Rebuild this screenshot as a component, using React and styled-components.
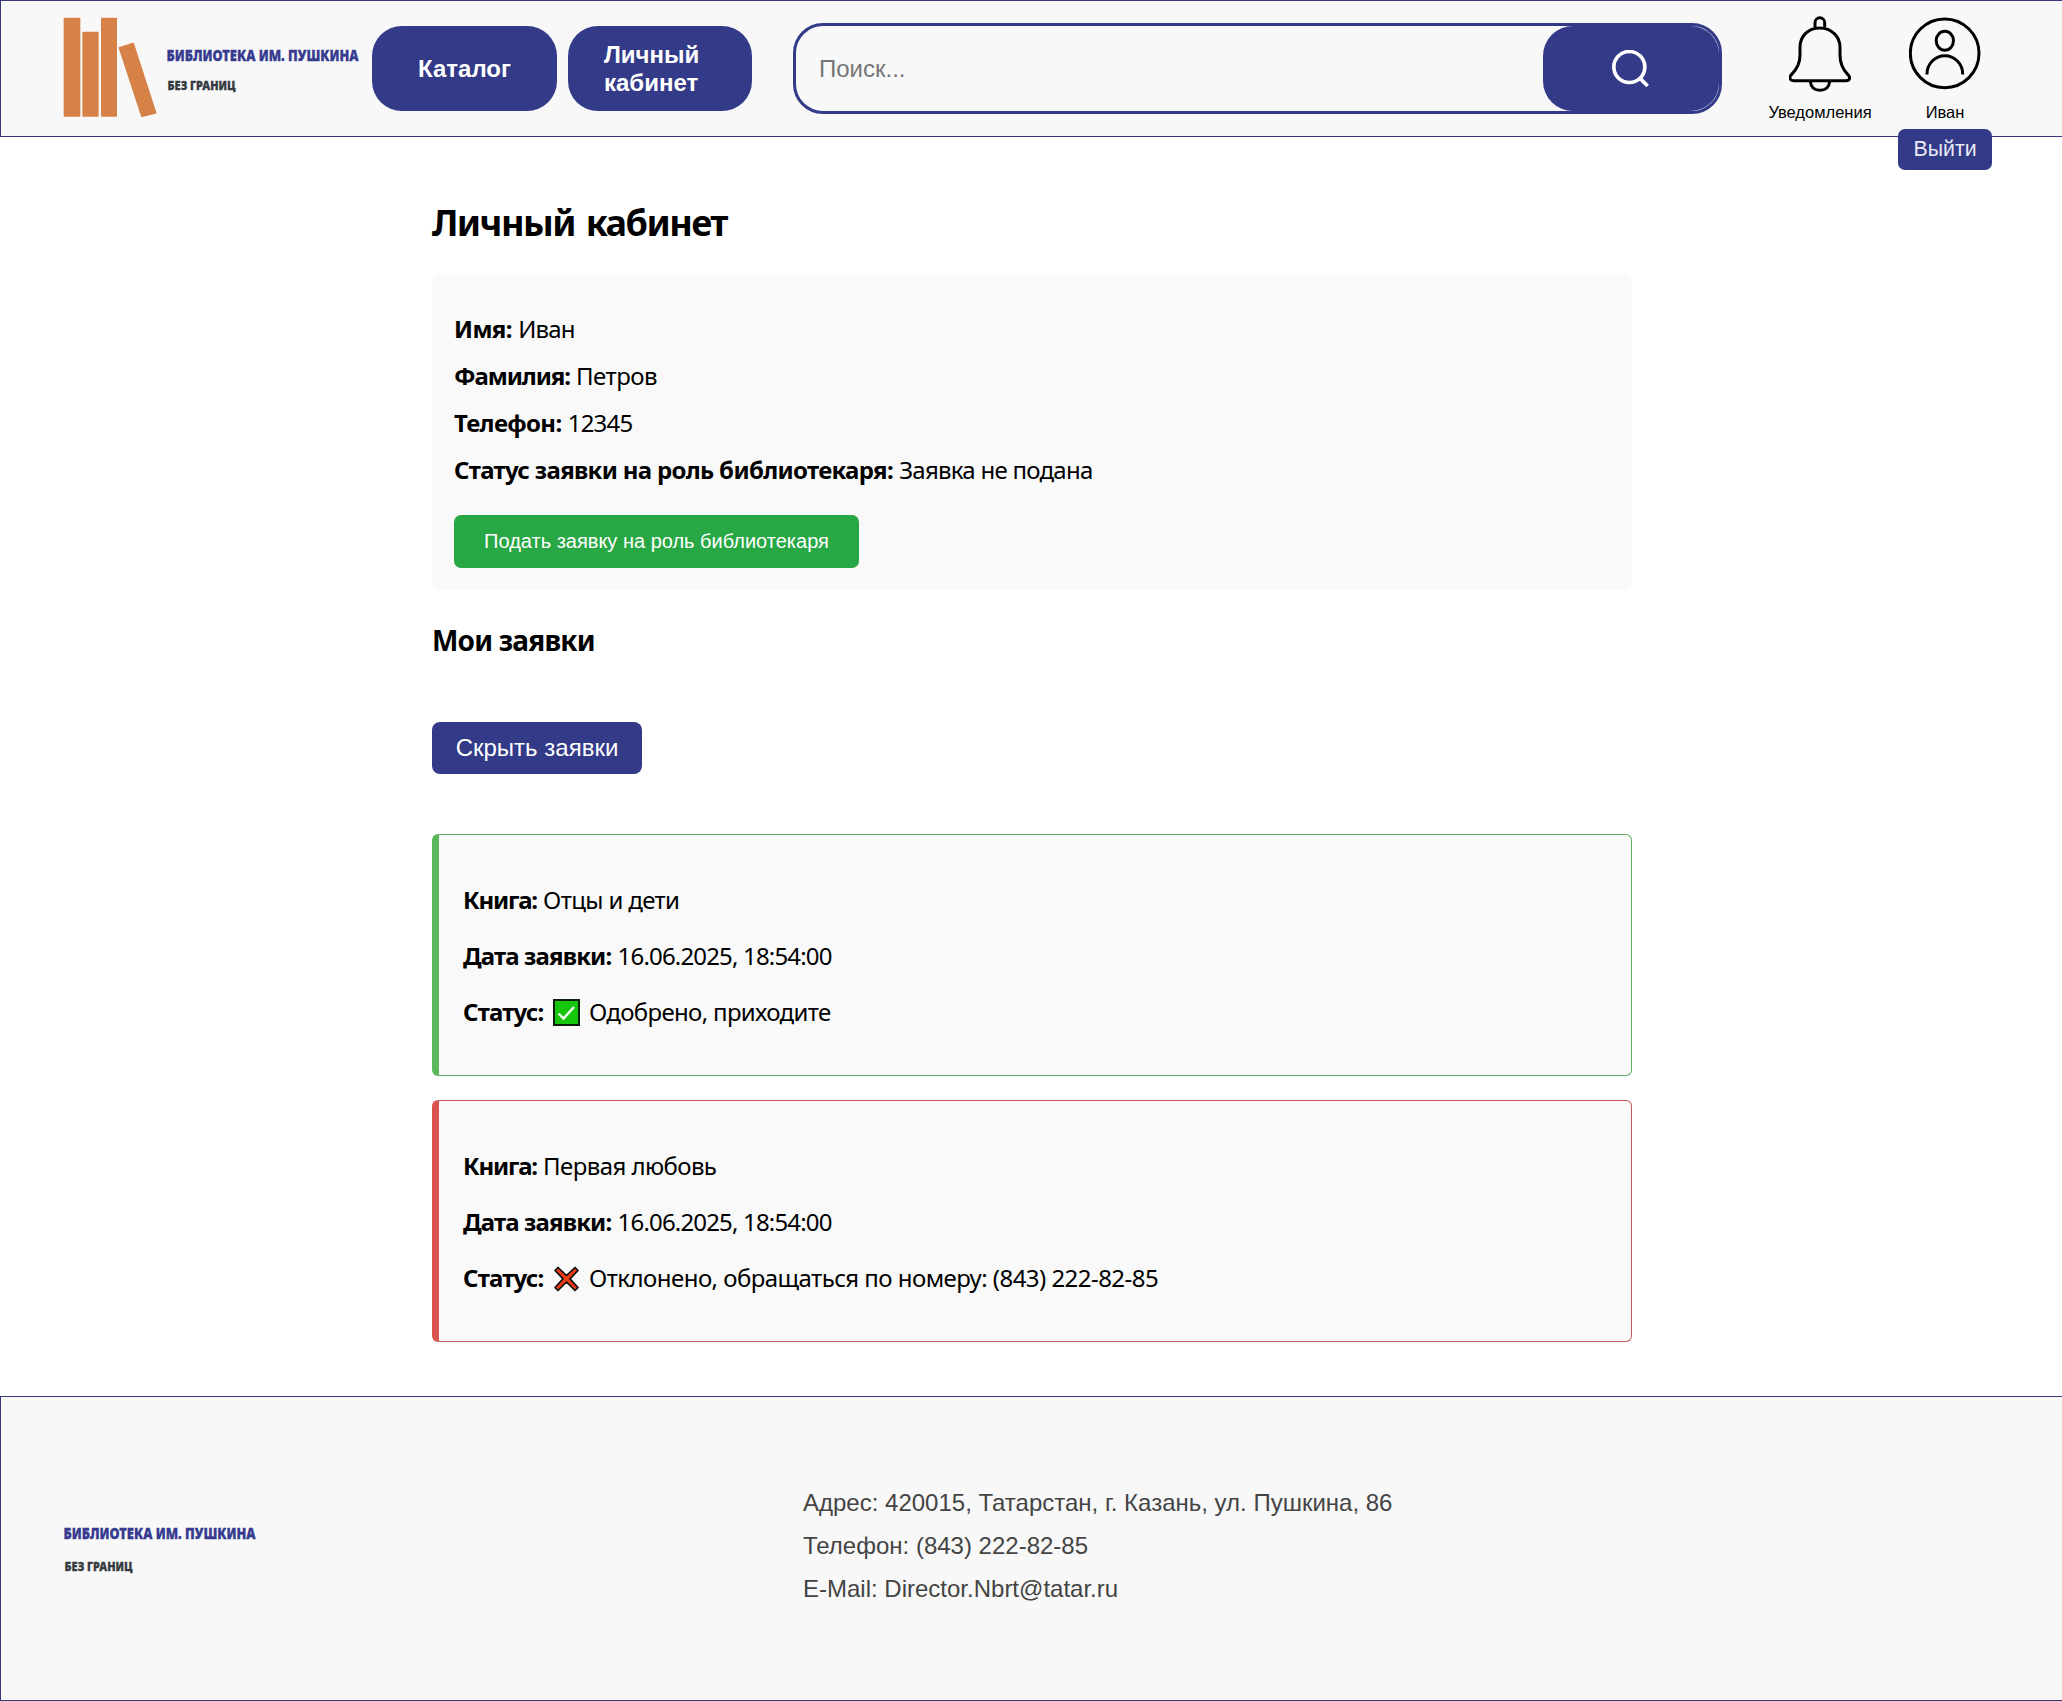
import React from 'react';
import styled, { createGlobalStyle } from 'styled-components';

const BLUE = '#333a87';
const EDGE = '#35387a';
const ARIAL = '"Liberation Sans", Arial, sans-serif';

const GlobalStyle = createGlobalStyle`
  * { box-sizing: border-box; }
  body { margin: 0; background: #fff; color: #000; font-family: "Noto Sans", "Segoe UI", sans-serif; }
  h1, h2, p { margin: 0; }
  button { border: 0; font-family: ${ARIAL}; cursor: pointer; }
`;

const Viewport = styled.div`
  overflow: hidden;
`;

const Page = styled.div`
  width: calc(100% + 2px);
`;

const Header = styled.header`
  display: flex;
  align-items: center;
  height: 137px;
  padding-left: 62px;
  background: #f8f8f8;
  border: 1px solid ${EDGE};
  font-family: ${ARIAL};
`;

const Logo = styled.a`
  display: flex;
  align-items: center;
  gap: 9px;
  width: 309px;
  flex: none;
`;

const Books = styled.svg`
  width: 94px;
  height: 100px;
  margin-top: -4px;
  fill: #d68147;
  stroke: #d68147;
  stroke-width: 6;
  stroke-linejoin: round;
`;

const Wordmark = styled.svg`
  display: block;
  width: 194px;
  height: ${(p) => p.$height}px;
  margin-top: ${(p) => p.$shift}px;
  overflow: visible;
  font-family: "Noto Sans", sans-serif;
  font-weight: 900;
  stroke-width: 0.3;
`;

const Nav = styled.nav`
  display: flex;
  gap: 11px;
`;

const NavButton = styled.button`
  width: ${(p) => p.$width}px;
  height: 85px;
  padding: 0 36px;
  border-radius: 30px;
  background: ${BLUE};
  color: #fff;
  font-size: 24px;
  font-weight: 700;
  line-height: 28px;
  text-align: ${(p) => p.$align || 'center'};
`;

const Search = styled.form`
  display: flex;
  width: 929px;
  height: 91px;
  margin-left: 41px;
  border: 3px solid ${BLUE};
  border-radius: 30px;
`;

const SearchInput = styled.input`
  flex: 1;
  min-width: 0;
  padding: 0 23px;
  border: 0;
  background: none;
  font: 24px ${ARIAL};
  &::placeholder { color: #757575; opacity: 1; }
`;

const SearchButton = styled.button`
  display: flex;
  align-items: center;
  justify-content: center;
  width: 176px;
  padding: 0 1px 0 0;
  border-radius: 30px 28px 28px 30px;
  background: ${BLUE};
`;

const LineIcon = styled.svg`
  display: block;
  width: ${(p) => p.$w}px;
  height: ${(p) => p.$h}px;
  fill: none;
  stroke: ${(p) => p.$color || '#000'};
  stroke-width: ${(p) => p.$stroke || 9};
`;

const Action = styled.div`
  position: relative;
  display: flex;
  flex-direction: column;
  align-items: center;
  justify-content: space-between;
  width: ${(p) => p.$width}px;
  height: 106px;
  margin: 1px 0 0 ${(p) => p.$left}px;
  padding-top: ${(p) => p.$top}px;
  font-size: 16.5px;
  line-height: 19px;
`;

const LogoutButton = styled.button`
  position: absolute;
  top: 113px;
  left: 0;
  width: 94px;
  height: 41px;
  padding: 0;
  border-radius: 7px;
  background: ${BLUE};
  color: #e9eaf5;
  font-size: 21.3px;
`;

const Main = styled.main`
  display: flex;
  flex-direction: column;
  align-items: flex-start;
  width: 1200px;
  margin: 0 auto;
  padding: 62px 0 54px;
`;

const Title = styled.h1`
  font-size: 36px;
  line-height: 48px;
  letter-spacing: -1.55px;
  word-spacing: 3px;
`;

const Subtitle = styled.h2`
  margin-top: 31px;
  font-size: 28px;
  line-height: 38px;
  letter-spacing: -0.8px;
`;

const ProfileCard = styled.section`
  display: flex;
  flex-direction: column;
  align-items: flex-start;
  gap: 15px;
  width: 100%;
  height: 315px;
  margin-top: 28px;
  padding: 38px 22px 22px;
  border-radius: 8px;
  background: #f9f9f9;
`;

const Row = styled.p`
  height: 32px;
  font-size: 24px;
  line-height: 32px;
  white-space: nowrap;
`;

const Label = styled.strong`
  font-weight: 700;
  letter-spacing: ${(p) => p.$track}px;
`;

const Value = styled.span`
  letter-spacing: ${(p) => p.$track}px;
`;

const ApplyButton = styled.button`
  width: 405px;
  height: 53px;
  margin-top: 14px;
  padding: 0;
  border-radius: 7px;
  background: #28a745;
  color: #fff;
  font-size: 20px;
`;

const ToggleButton = styled.button`
  width: 210px;
  height: 52px;
  margin: 63px 0 60px;
  padding: 0;
  border-radius: 8px;
  background: ${BLUE};
  color: #fff;
  font-size: 24px;
`;

const RequestList = styled.div`
  display: flex;
  flex-direction: column;
  gap: 24px;
  width: 100%;
`;

const RequestCard = styled.article`
  display: flex;
  flex-direction: column;
  gap: 24px;
  height: 242px;
  padding: 49px 24px;
  border: 1px solid ${(p) => p.$edge};
  border-left: 7px solid ${(p) => p.$color};
  border-radius: 6px;
  background: #f9f9f9;
`;

const StatusIcon = styled.svg`
  width: 27px;
  height: 27px;
  margin: 0 3px 0 3px;
  vertical-align: -5px;
`;

const Footer = styled.footer`
  display: flex;
  height: 305px;
  padding: 84px 0 0 62px;
  background: #f8f8f8;
  border: 1px solid ${EDGE};
`;

const FooterLogo = styled.div`
  width: 740px;
  padding-top: 46px;
`;

const Contacts = styled.address`
  font: normal 24px/43px ${ARIAL};
  color: #444;
`;

const LogoText = ({ height, second, shift = 0 }) => (
  <Wordmark $height={height} $shift={shift} viewBox={`0 0 194 ${height}`}>
    <text x="0.5" y="12" fontSize="15.4" fill="#363b8f" stroke="#363b8f" textLength="192" lengthAdjust="spacingAndGlyphs">
      БИБЛИОТЕКА ИМ. ПУШКИНА
    </text>
    <text x="1.5" y={second} fontSize="12.2" fill="#363b42" stroke="#363b42" textLength="68" lengthAdjust="spacingAndGlyphs">
      БЕЗ ГРАНИЦ
    </text>
  </Wordmark>
);

const Approved = () => (
  <StatusIcon viewBox="0 0 27 27">
    <rect x="1" y="1" width="25" height="25" fill="#16c60c" stroke="#0c1f0c" strokeWidth="2" />
    <path d="M5.5 14.5l5 5L21 8" fill="none" stroke="#f4fff4" strokeWidth="2.4" />
  </StatusIcon>
);

const Rejected = () => (
  <StatusIcon viewBox="0 0 27 27">
    <path
      d="M5 2.500l8.500 8L22 2.500l3 3-8 8.400 8 8.600-3 3-8.500-8.500L5 25.500l-3-3 8-8.600-8-8.400z"
      fill="#f03a17"
      stroke="#111"
      strokeWidth="1.7"
      strokeLinejoin="round"
    />
  </StatusIcon>
);

const profile = [
  ['Имя:', -0.6, 'Иван', -0.8],
  ['Фамилия:', -1.1, 'Петров', -0.55],
  ['Телефон:', -0.65, '12345', -0.8],
  ['Статус заявки на роль библиотекаря:', -0.68, 'Заявка не подана', -0.74],
];

const requests = [
  {
    color: '#5cb85c',
    edge: '#62ae65',
    book: 'Отцы и дети',
    bookTrack: -0.65,
    status: 'Одобрено, приходите',
    track: -0.66,
    Icon: Approved,
  },
  {
    color: '#d9534f',
    edge: '#c35c58',
    book: 'Первая любовь',
    bookTrack: -0.58,
    status: 'Отклонено, обращаться по номеру: (843) 222-82-85',
    track: -0.54,
    Icon: Rejected,
  },
];

export default function App() {
  return (
    <Viewport>
      <GlobalStyle />
      <Page>
        <Header>
          <Logo>
            <Books viewBox="69 49 282 300">
              <path d="M74 54h44v291H74zM130 96h43v249h-43zM186 54h42v291h-42zM239 142l40-13 67 207-40 10z" />
            </Books>
            <LogoText height={42} second={41} shift={3} />
          </Logo>
          <Nav>
            <NavButton $width={185}>Каталог</NavButton>
            <NavButton $width={184} $align="left">Личный кабинет</NavButton>
          </Nav>
          <Search>
            <SearchInput placeholder="Поиск..." />
            <SearchButton type="button">
              <LineIcon $w={37} $h={37} $color="#fff" $stroke={11} viewBox="38 149 111 111">
                <circle cx="90" cy="200" r="46.5" />
                <path d="M122 234l23 23" />
              </LineIcon>
            </SearchButton>
          </Search>
          <Action $width={104} $left={46} $top={0}>
            <LineIcon $w={63} $h={76} viewBox="566 46 189 228">
              <path d="M658 82C622 82 599 108 599 140V163C599 190 590 205 574 221C564 231 569 240 580 240H737C748 240 752 231 742 221C726 205 719 190 719 163V140C719 108 694 82 658 82Z" />
              <path d="M644 80V66a14.500 14.500 0 0 1 29 0V80M630 243C632 260 643 269 659 269S686 260 688 243" />
            </LineIcon>
            Уведомления
          </Action>
          <Action $width={94} $left={26} $top={1}>
            <LineIcon $w={72} $h={73} viewBox="926 51 217 219">
              <circle cx="1033.500" cy="160" r="103.500" />
              <ellipse cx="1034" cy="122" rx="26" ry="28.500" />
              <path d="M980 224C980 191 1005 167 1034 167S1088 191 1088 224" />
            </LineIcon>
            Иван
            <LogoutButton>Выйти</LogoutButton>
          </Action>
        </Header>

        <Main>
          <Title>Личный кабинет</Title>
          <ProfileCard>
            {profile.map(([label, labelTrack, value, valueTrack]) => (
              <Row key={label}>
                <Label $track={labelTrack}>{label}</Label> <Value $track={valueTrack}>{value}</Value>
              </Row>
            ))}
            <ApplyButton>Подать заявку на роль библиотекаря</ApplyButton>
          </ProfileCard>

          <Subtitle>Мои заявки</Subtitle>
          <ToggleButton>Скрыть заявки</ToggleButton>

          <RequestList>
            {requests.map(({ color, edge, book, bookTrack, status, track, Icon }) => (
              <RequestCard key={book} $color={color} $edge={edge}>
                <Row>
                  <Label $track={-1.2}>Книга:</Label> <Value $track={bookTrack}>{book}</Value>
                </Row>
                <Row>
                  <Label $track={-0.85}>Дата заявки:</Label> <Value $track={-0.83}>16.06.2025, 18:54:00</Value>
                </Row>
                <Row>
                  <Label $track={-0.8}>Статус:</Label> <Icon /> <Value $track={track}>{status}</Value>
                </Row>
              </RequestCard>
            ))}
          </RequestList>
        </Main>

        <Footer>
          <FooterLogo>
            <LogoText height={46} second={44} />
          </FooterLogo>
          <Contacts>
            <div>Адрес: 420015, Татарстан, г. Казань, ул. Пушкина, 86</div>
            <div>Телефон: (843) 222-82-85</div>
            <div>E-Mail: Director.Nbrt@tatar.ru</div>
          </Contacts>
        </Footer>
      </Page>
    </Viewport>
  );
}
